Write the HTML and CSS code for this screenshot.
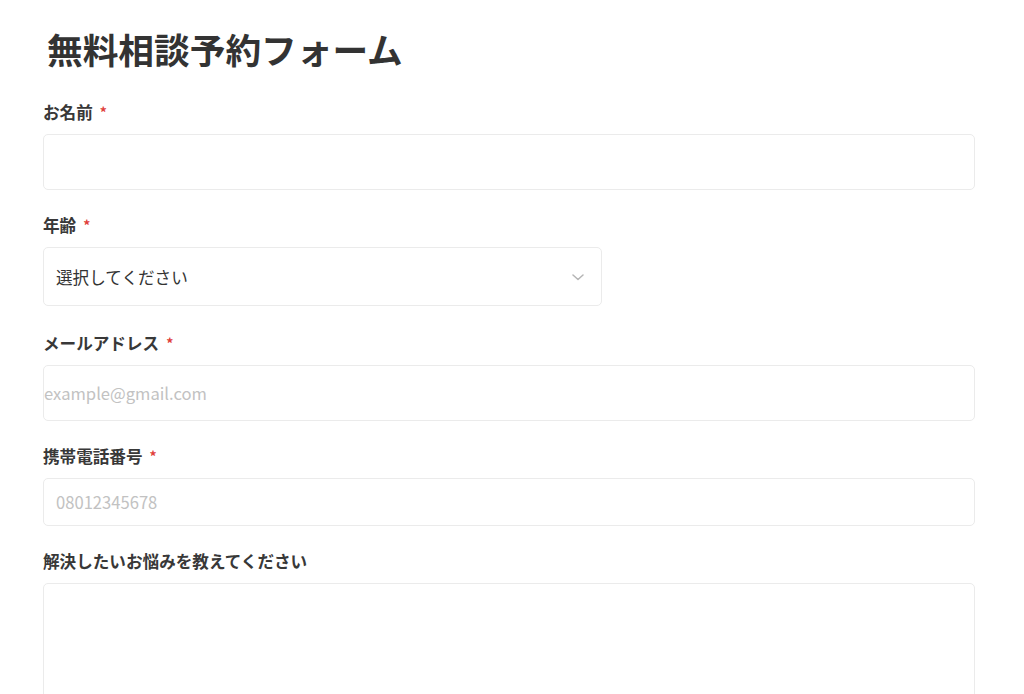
FILE: index.html
```html
<!DOCTYPE html>
<html lang="ja">
<head>
<meta charset="utf-8">
<title>無料相談予約フォーム</title>
<link rel="stylesheet" href="styles.css">
</head>
<body>
<main class="page">
  <h1 class="title">無料相談予約フォーム</h1>
  <form class="form">
    <div class="field">
      <label class="label">お名前<span class="req">*</span></label>
      <div class="box box-name"></div>
    </div>
    <div class="field field-select">
      <label class="label">年齢<span class="req">*</span></label>
      <div class="box box-select">
        <span class="select-text">選択してください</span>
        <svg class="chevron" width="12" height="7" viewBox="0 0 12 7"><path d="M1 1l5 4.5L11 1" fill="none" stroke="#b5b5b5" stroke-width="1.5" stroke-linecap="round" stroke-linejoin="round"/></svg>
      </div>
    </div>
    <div class="field">
      <label class="label">メールアドレス<span class="req">*</span></label>
      <div class="box box-email"><span class="ph">example@gmail.com</span></div>
    </div>
    <div class="field">
      <label class="label">携帯電話番号<span class="req">*</span></label>
      <div class="box box-phone"><span class="ph">08012345678</span></div>
    </div>
    <div class="field">
      <label class="label">解決したいお悩みを教えてください</label>
      <div class="box box-text"></div>
    </div>
  </form>
</main>
</body>
</html>
```

FILE: styles.css
```css
html, body {
  margin: 0;
  padding: 0;
  background: #ffffff;
}
body {
  font-family: "Noto Sans CJK JP", "Noto Sans", sans-serif;
  color: #333333;
  overflow: hidden;
}
.page {
  width: 932px;
  padding: 27px 0 0 43px;
}
.title {
  margin: 0 0 0 4px;
  font-size: 35.7px;
  font-weight: 700;
  line-height: 44px;
  color: #333333;
}
.form {
  display: flex;
  flex-direction: column;
  gap: 23px;
  margin-top: 29px;
}
.field {
  display: flex;
  flex-direction: column;
  gap: 10px;
}
.field-select { margin-bottom: 2px; }
.label {
  font-size: 16.6px;
  font-weight: 700;
  line-height: 24px;
  color: #383838;
  display: flex;
  align-items: center;
}
.req {
  color: #e0403a;
  font-size: 14px;
  margin-left: 7px;
}
.box {
  box-sizing: border-box;
  border: 1px solid #ebebeb;
  border-radius: 5px;
  background: #fff;
  display: flex;
  align-items: center;
}
.box-name { height: 56px; }
.box-select {
  width: 559px;
  height: 59px;
  padding: 0 17px 0 12px;
  justify-content: space-between;
}
.select-text {
  font-size: 16.6px;
  color: #333333;
}
.chevron { display: block; margin-top: 1px; }
.box-email { height: 56px; }
.box-phone { height: 48px; padding-left: 12px; }
.ph {
  font-size: 16.6px;
  color: #c2c2c2;
}
.box-text { height: 140px; }
```
